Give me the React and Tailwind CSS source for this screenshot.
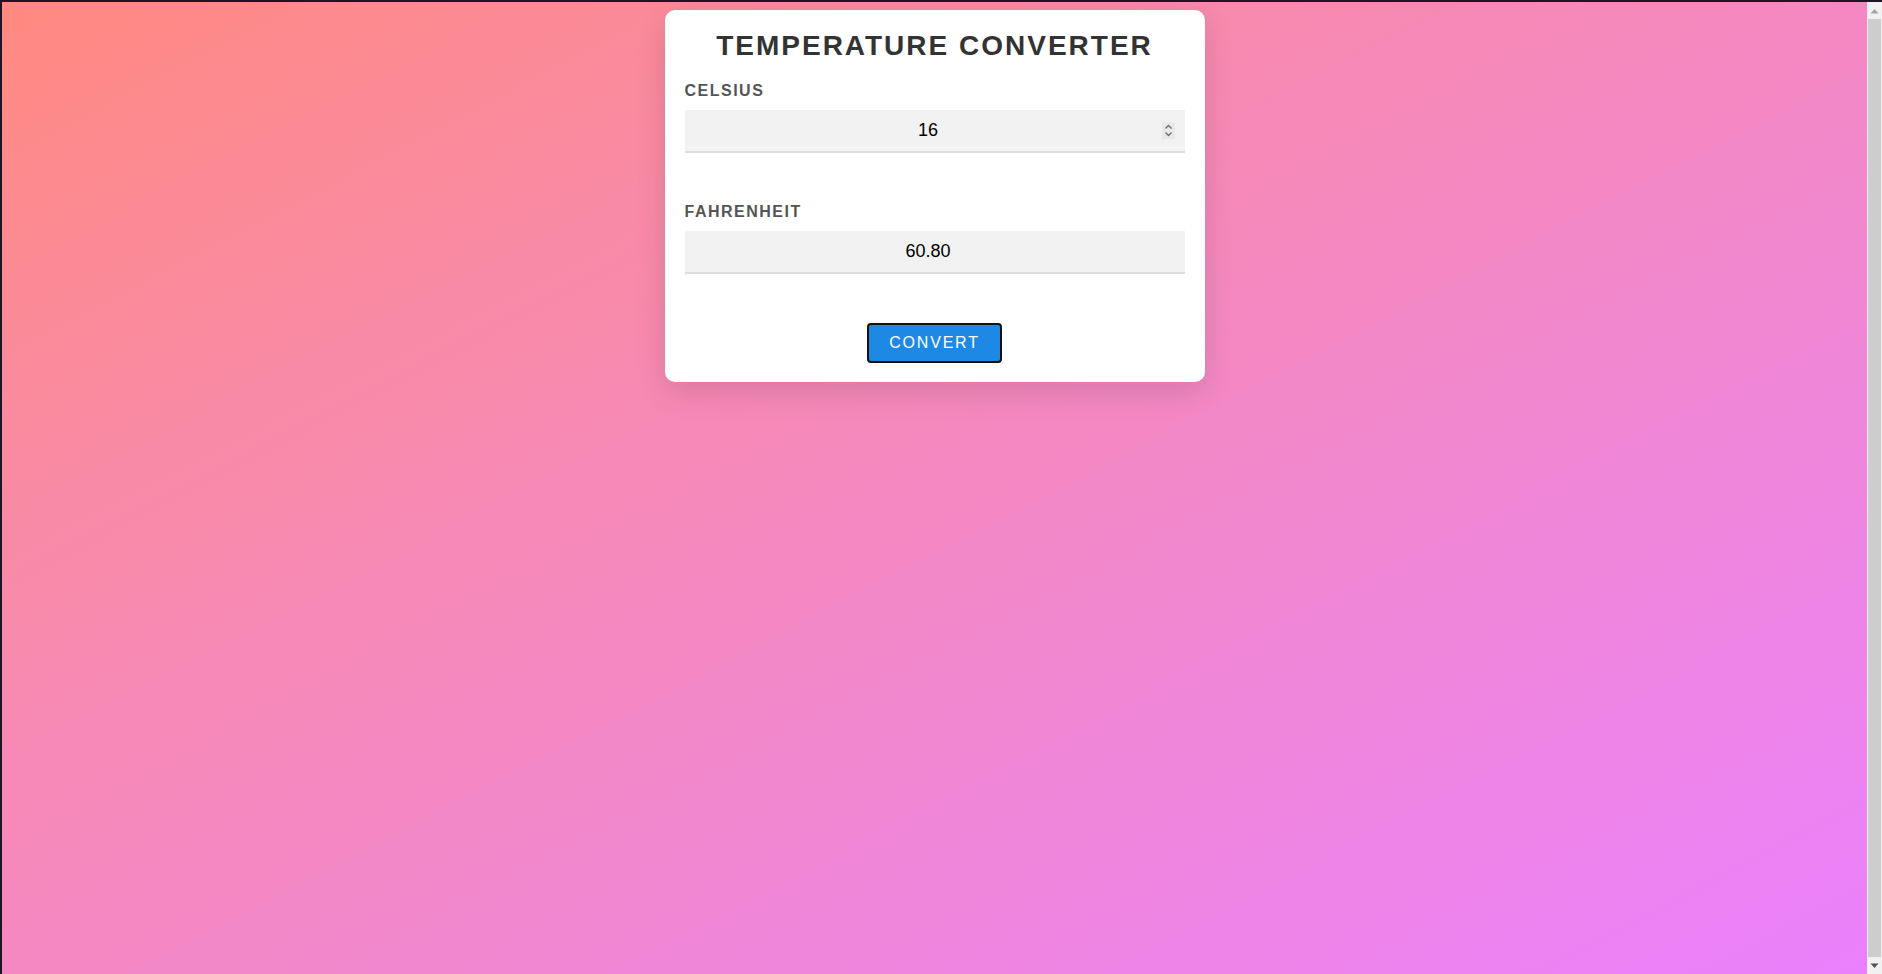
import React, { useState } from 'react';

const font = { fontFamily: '"Liberation Sans", Arial, sans-serif' };

const Spinner = () => (
  <div className="w-[13px] h-[17px] bg-[#e9e9e9] flex items-center justify-center">
    <svg width="9" height="13" viewBox="0 0 9 13" fill="none" stroke="#6b6b6b" strokeWidth="1.3">
      <path d="M1.5 4.5 L4.5 1.5 L7.5 4.5" />
      <path d="M1.5 8.5 L4.5 11.5 L7.5 8.5" />
    </svg>
  </div>
);

const Field = ({ label, value, onChange, spinner, readOnly }) => (
  <div>
    <label className="block text-[16px] font-bold tracking-[1.5px] text-[#555] leading-[18px] mb-[10px]">
      {label}
    </label>
    <div className="flex items-center bg-[#f2f2f2] border-b-2 border-[#dddddd] px-[10px] h-[43px]">
      <input
        type="text"
        value={value}
        readOnly={readOnly}
        onChange={onChange}
        className="flex-1 min-w-0 bg-transparent text-center text-[18px] text-black outline-none"
        style={font}
      />
      {spinner ? <Spinner /> : <div className="w-[13px]" />}
    </div>
  </div>
);

const ScrollBar = () => (
  <div className="w-[15px] flex flex-col bg-[#f1f1f1]">
    <div className="h-[17px] flex items-center justify-center">
      <svg width="9" height="6" viewBox="0 0 9 6" fill="#a3a3a3">
        <path d="M0.5 5.5 L4.5 1 L8.5 5.5 Z" />
      </svg>
    </div>
    <div className="flex-1 bg-[#cdcdcd] mx-[1px]" />
    <div className="h-[17px] flex items-center justify-center">
      <svg width="9" height="6" viewBox="0 0 9 6" fill="#505050">
        <path d="M0.5 0.5 L4.5 5 L8.5 0.5 Z" />
      </svg>
    </div>
  </div>
);

export default function App() {
  const [celsius, setCelsius] = useState('16');
  const [fahrenheit, setFahrenheit] = useState('60.80');

  const convert = () => {
    const c = parseFloat(celsius);
    if (!isNaN(c)) setFahrenheit(((c * 9) / 5 + 32).toFixed(2));
  };

  return (
    <div className="h-screen flex border-t-2 border-l-2 border-[#1b1622] overflow-hidden" style={font}>
      <div className="flex-1 bg-gradient-to-br from-[#ff8a80] to-[#ea80fc] flex justify-center items-start">
        <div className="mt-[8px] w-[540px] bg-white rounded-[10px] shadow-[0_10px_30px_rgba(0,0,0,0.12)] px-[20px] pt-[20px] pb-[19px]">
          <h1 className="text-center text-[28px] font-bold tracking-[2px] text-[#333] leading-[32px] mb-[20px]">
            TEMPERATURE CONVERTER
          </h1>
          <Field label="CELSIUS" value={celsius} onChange={(e) => setCelsius(e.target.value)} spinner />
          <div className="h-[50px]" />
          <Field label="FAHRENHEIT" value={fahrenheit} readOnly />
          <div className="flex justify-center mt-[49px]">
            <button
              onClick={convert}
              className="bg-[#1e88e5] text-white text-[16px] tracking-[1.8px] leading-[18px] px-[20px] py-[9px] border-2 border-[#111] rounded-[4px]"
            >
              CONVERT
            </button>
          </div>
        </div>
      </div>
      <ScrollBar />
    </div>
  );
}
